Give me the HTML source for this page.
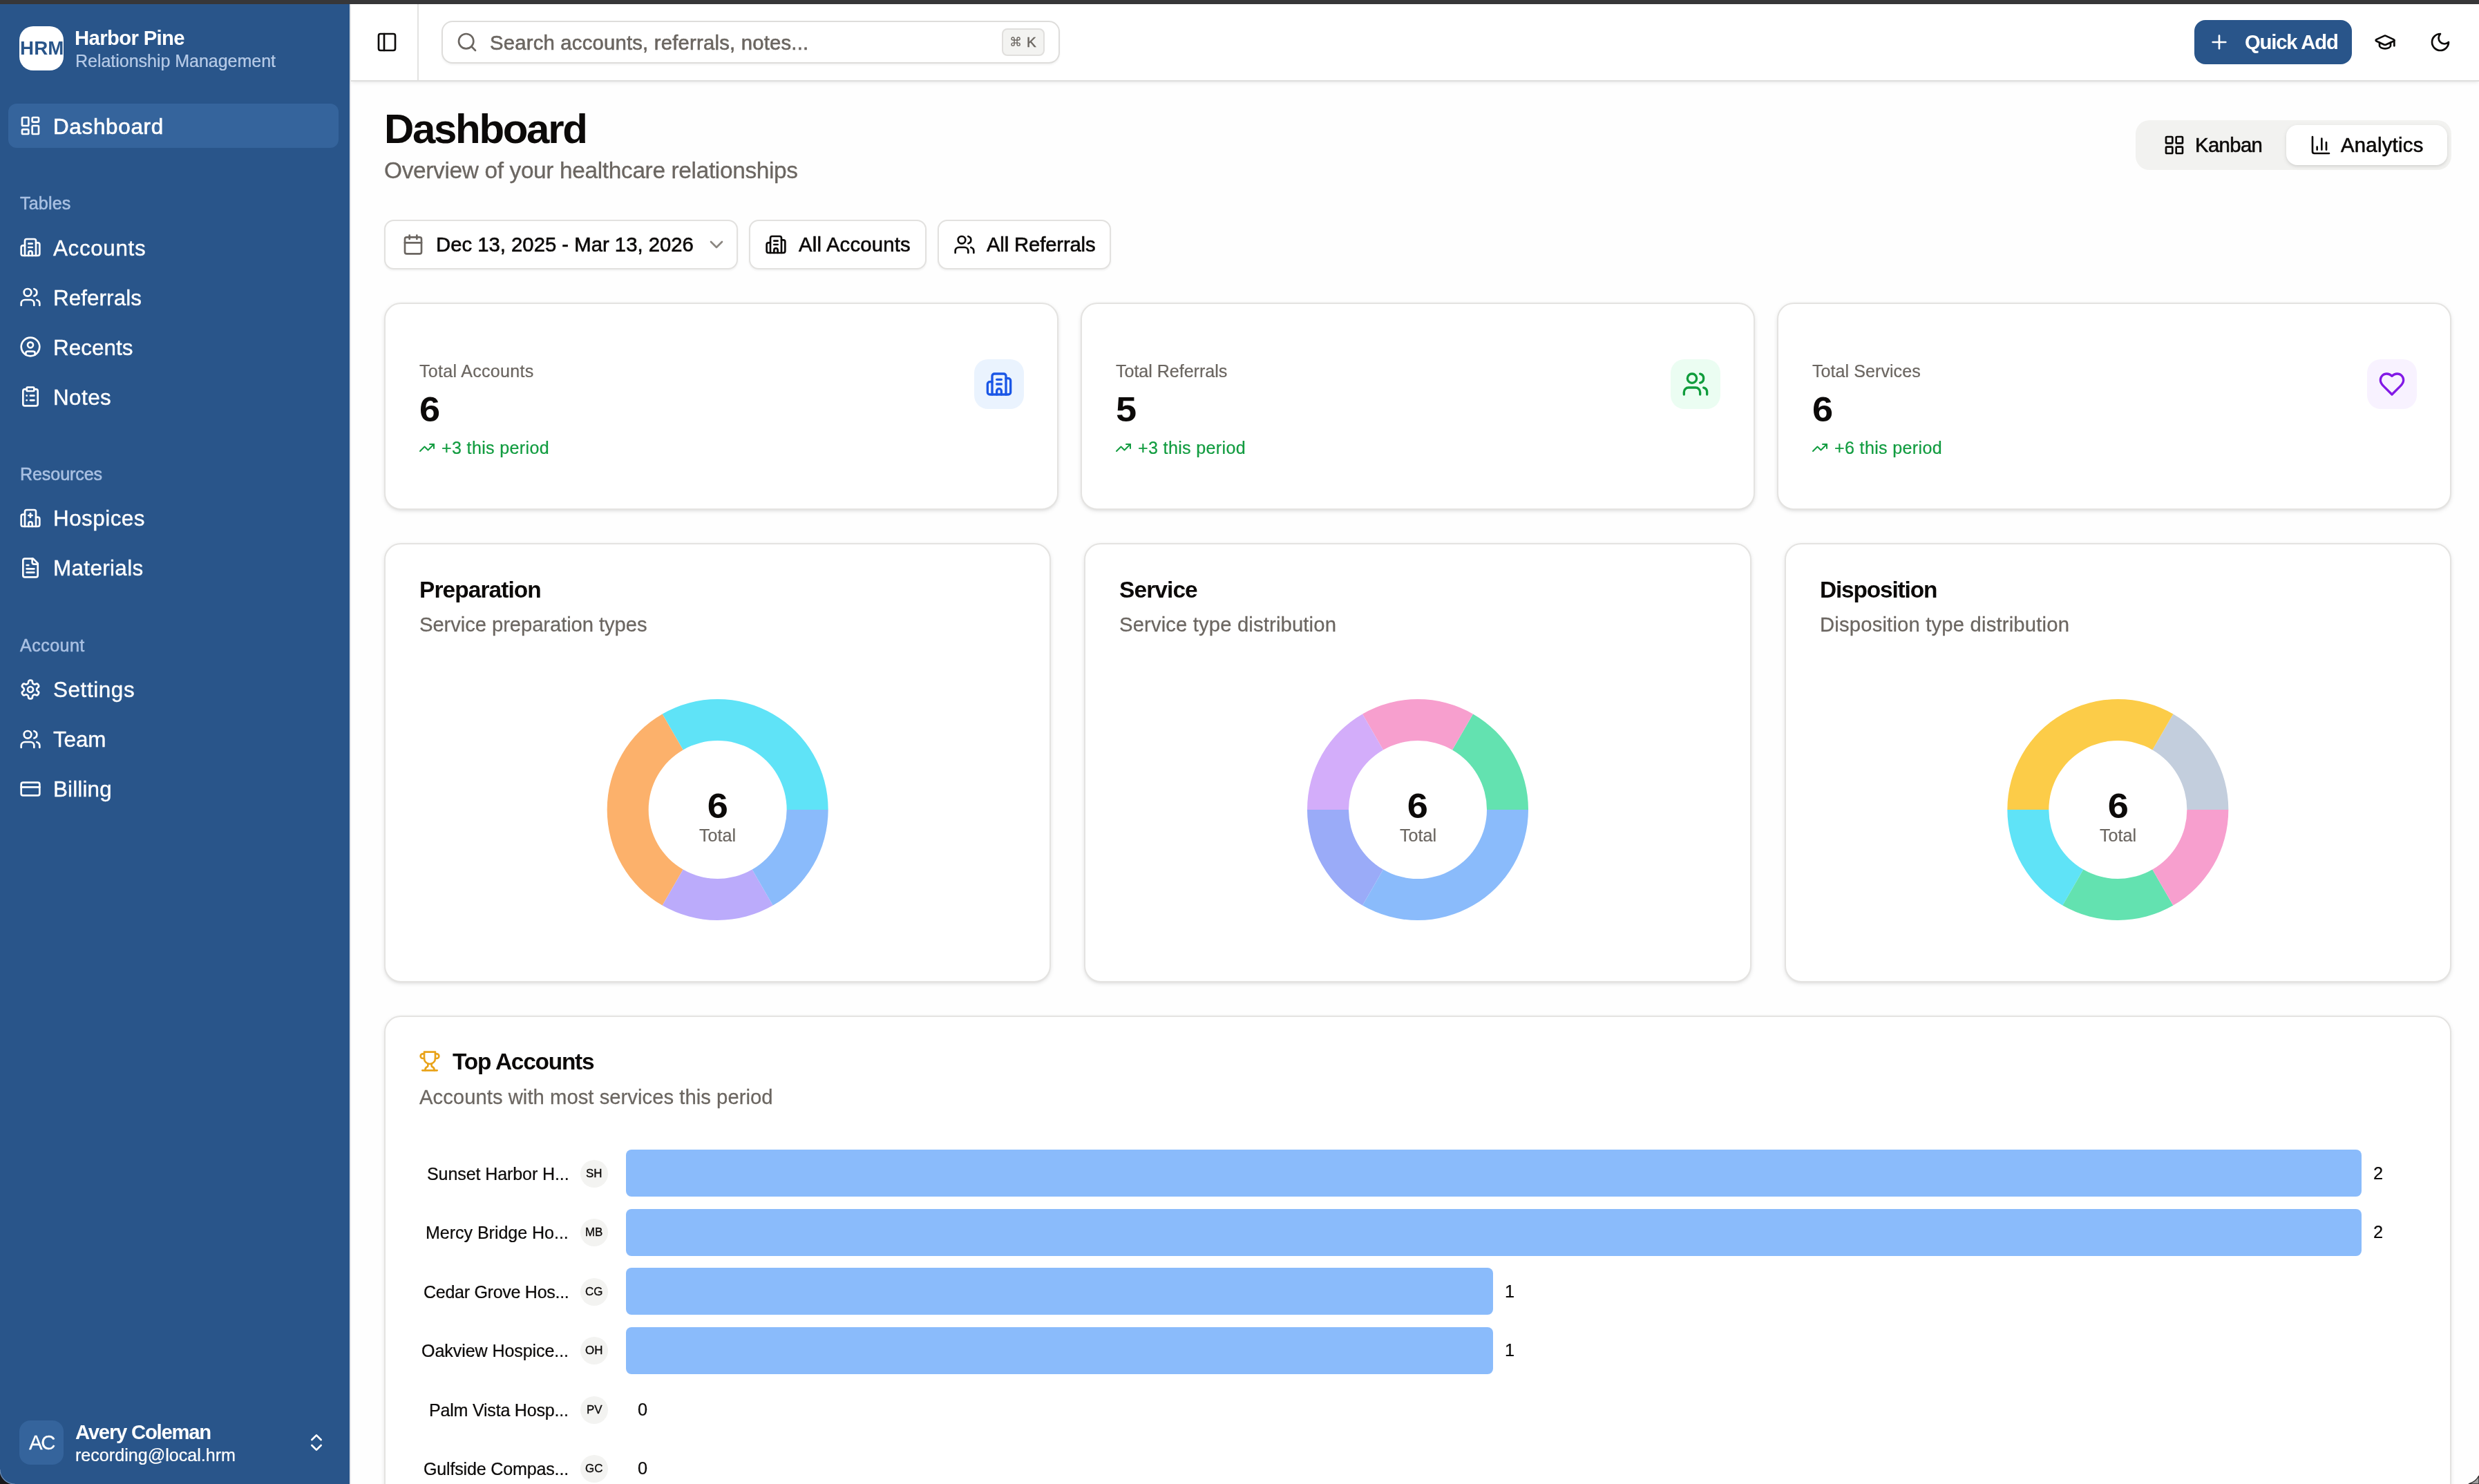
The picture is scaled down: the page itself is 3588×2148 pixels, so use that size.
<!DOCTYPE html>
<html><head><meta charset="utf-8"><title>Dashboard</title>
<style>
html,body{margin:0;padding:0}
body{width:3588px;height:2148px;overflow:hidden;background:#fefefe;font-family:"Liberation Sans",sans-serif;position:relative;-webkit-font-smoothing:antialiased}
body>div,body>svg{position:absolute}
.t{margin:0;padding:0;will-change:transform}
.i{display:block;overflow:visible}
</style></head><body>
<div style="left:0px;top:0px;width:3588px;height:6px;background:#373739;"></div>
<div style="left:0px;top:6px;width:506px;height:2142px;background:#29558a;"></div>
<div style="left:506px;top:6px;width:2px;height:2142px;background:#e6e8ec;"></div>
<div style="left:28px;top:38px;width:64px;height:64px;background:#fff;border-radius:20px;"></div>
<div class="t" style="left:28.75px;top:52.00px;font-size:27.69px;line-height:36px;color:#29558a;white-space:pre;font-weight:700;letter-spacing:0.143px;">HRM</div>
<div class="t" style="left:108.00px;top:35.86px;font-size:29.26px;line-height:38px;color:#fff;white-space:pre;font-weight:700;letter-spacing:-0.622px;">Harbor Pine</div>
<div class="t" style="left:109.00px;top:71.81px;font-size:25.08px;line-height:33px;color:#b7cbe7;white-space:pre;-webkit-text-stroke:0.23px #b7cbe7;letter-spacing:-0.061px;">Relationship Management</div>
<div style="left:12px;top:150px;width:478px;height:64px;background:#35649c;border-radius:12px;"></div>
<svg class="i" style="left:28px;top:166px;" width="32" height="32" viewBox="0 0 24 24" fill="none" stroke="#fff" stroke-width="2" stroke-linecap="round" stroke-linejoin="round"><rect width="7" height="9" x="3" y="3" rx="1"/><rect width="7" height="5" x="14" y="3" rx="1"/><rect width="7" height="9" x="14" y="12" rx="1"/><rect width="7" height="5" x="3" y="16" rx="1"/></svg>
<div class="t" style="left:77.00px;top:162.64px;font-size:31.35px;line-height:41px;color:#fff;white-space:pre;-webkit-text-stroke:0.66px #fff;letter-spacing:0.736px;">Dashboard</div>
<div class="t" style="left:29.00px;top:278.11px;font-size:25.08px;line-height:33px;color:#a9c0e2;white-space:pre;-webkit-text-stroke:0.53px #a9c0e2;letter-spacing:0.167px;">Tables</div>
<div class="t" style="left:29.00px;top:670.11px;font-size:25.08px;line-height:33px;color:#a9c0e2;white-space:pre;-webkit-text-stroke:0.53px #a9c0e2;letter-spacing:-0.098px;">Resources</div>
<div class="t" style="left:29.00px;top:918.11px;font-size:25.08px;line-height:33px;color:#a9c0e2;white-space:pre;-webkit-text-stroke:0.53px #a9c0e2;letter-spacing:0.440px;">Account</div>
<svg class="i" style="left:28px;top:342px;" width="32" height="32" viewBox="0 0 24 24" fill="none" stroke="#fff" stroke-width="2" stroke-linecap="round" stroke-linejoin="round"><path d="M10 12h4"/><path d="M10 8h4"/><path d="M14 21v-3a2 2 0 0 0-4 0v3"/><path d="M6 10H4a2 2 0 0 0-2 2v7a2 2 0 0 0 2 2h16a2 2 0 0 0 2-2V9a2 2 0 0 0-2-2h-2"/><path d="M6 21V5a2 2 0 0 1 2-2h8a2 2 0 0 1 2 2v16"/></svg>
<div class="t" style="left:77.00px;top:338.64px;font-size:31.35px;line-height:41px;color:#fff;white-space:pre;-webkit-text-stroke:0.38px #fff;letter-spacing:0.662px;">Accounts</div>
<svg class="i" style="left:28px;top:414px;" width="32" height="32" viewBox="0 0 24 24" fill="none" stroke="#fff" stroke-width="2" stroke-linecap="round" stroke-linejoin="round"><path d="M16 21v-2a4 4 0 0 0-4-4H6a4 4 0 0 0-4 4v2"/><circle cx="9" cy="7" r="4"/><path d="M22 21v-2a4 4 0 0 0-3-3.87"/><path d="M16 3.13a4 4 0 0 1 0 7.75"/></svg>
<div class="t" style="left:77.00px;top:410.64px;font-size:31.35px;line-height:41px;color:#fff;white-space:pre;-webkit-text-stroke:0.38px #fff;letter-spacing:0.091px;">Referrals</div>
<svg class="i" style="left:28px;top:486px;" width="32" height="32" viewBox="0 0 24 24" fill="none" stroke="#fff" stroke-width="2" stroke-linecap="round" stroke-linejoin="round"><circle cx="12" cy="12" r="10"/><circle cx="12" cy="10" r="3"/><path d="M7 20.662V19a2 2 0 0 1 2-2h6a2 2 0 0 1 2 2v1.662"/></svg>
<div class="t" style="left:77.00px;top:482.64px;font-size:31.35px;line-height:41px;color:#fff;white-space:pre;-webkit-text-stroke:0.38px #fff;letter-spacing:0.070px;">Recents</div>
<svg class="i" style="left:28px;top:558px;" width="32" height="32" viewBox="0 0 24 24" fill="none" stroke="#fff" stroke-width="2" stroke-linecap="round" stroke-linejoin="round"><rect width="8" height="4" x="8" y="2" rx="1" ry="1"/><path d="M16 4h2a2 2 0 0 1 2 2v14a2 2 0 0 1-2 2H6a2 2 0 0 1-2-2V6a2 2 0 0 1 2-2h2"/><path d="M12 11h4"/><path d="M12 16h4"/><path d="M8 11h.01"/><path d="M8 16h.01"/></svg>
<div class="t" style="left:77.00px;top:554.64px;font-size:31.35px;line-height:41px;color:#fff;white-space:pre;-webkit-text-stroke:0.38px #fff;letter-spacing:0.471px;">Notes</div>
<svg class="i" style="left:28px;top:733.8px;" width="32" height="32" viewBox="0 0 24 24" fill="none" stroke="#fff" stroke-width="2" stroke-linecap="round" stroke-linejoin="round"><path d="M12 7v4"/><path d="M14 21v-3a2 2 0 0 0-4 0v3"/><path d="M14 9h-4"/><path d="M18 11h2a2 2 0 0 1 2 2v6a2 2 0 0 1-2 2H4a2 2 0 0 1-2-2v-9a2 2 0 0 1 2-2h2"/><path d="M18 21V5a2 2 0 0 0-2-2H8a2 2 0 0 0-2 2v16"/></svg>
<div class="t" style="left:77.00px;top:730.44px;font-size:31.35px;line-height:41px;color:#fff;white-space:pre;-webkit-text-stroke:0.38px #fff;letter-spacing:0.508px;">Hospices</div>
<svg class="i" style="left:28px;top:805.8px;" width="32" height="32" viewBox="0 0 24 24" fill="none" stroke="#fff" stroke-width="2" stroke-linecap="round" stroke-linejoin="round"><path d="M15 2H6a2 2 0 0 0-2 2v16a2 2 0 0 0 2 2h12a2 2 0 0 0 2-2V7Z"/><path d="M14 2v4a2 2 0 0 0 2 2h4"/><path d="M10 9H8"/><path d="M16 13H8"/><path d="M16 17H8"/></svg>
<div class="t" style="left:77.00px;top:802.44px;font-size:31.35px;line-height:41px;color:#fff;white-space:pre;-webkit-text-stroke:0.38px #fff;letter-spacing:0.380px;">Materials</div>
<svg class="i" style="left:28px;top:981.7px;" width="32" height="32" viewBox="0 0 24 24" fill="none" stroke="#fff" stroke-width="2" stroke-linecap="round" stroke-linejoin="round"><path d="M12.22 2h-.44a2 2 0 0 0-2 2v.18a2 2 0 0 1-1 1.73l-.43.25a2 2 0 0 1-2 0l-.15-.08a2 2 0 0 0-2.73.73l-.22.38a2 2 0 0 0 .73 2.73l.15.1a2 2 0 0 1 1 1.72v.51a2 2 0 0 1-1 1.74l-.15.09a2 2 0 0 0-.73 2.73l.22.38a2 2 0 0 0 2.73.73l.15-.08a2 2 0 0 1 2 0l.43.25a2 2 0 0 1 1 1.73V20a2 2 0 0 0 2 2h.44a2 2 0 0 0 2-2v-.18a2 2 0 0 1 1-1.73l.43-.25a2 2 0 0 1 2 0l.15.08a2 2 0 0 0 2.73-.73l.22-.39a2 2 0 0 0-.73-2.73l-.15-.08a2 2 0 0 1-1-1.74v-.5a2 2 0 0 1 1-1.74l.15-.09a2 2 0 0 0 .73-2.73l-.22-.38a2 2 0 0 0-2.73-.73l-.15.08a2 2 0 0 1-2 0l-.43-.25a2 2 0 0 1-1-1.73V4a2 2 0 0 0-2-2z"/><circle cx="12" cy="12" r="3"/></svg>
<div class="t" style="left:77.00px;top:978.34px;font-size:31.35px;line-height:41px;color:#fff;white-space:pre;-webkit-text-stroke:0.38px #fff;letter-spacing:0.615px;">Settings</div>
<svg class="i" style="left:28px;top:1053.7px;" width="32" height="32" viewBox="0 0 24 24" fill="none" stroke="#fff" stroke-width="2" stroke-linecap="round" stroke-linejoin="round"><path d="M16 21v-2a4 4 0 0 0-4-4H6a4 4 0 0 0-4 4v2"/><circle cx="9" cy="7" r="4"/><path d="M22 21v-2a4 4 0 0 0-3-3.87"/><path d="M16 3.13a4 4 0 0 1 0 7.75"/></svg>
<div class="t" style="left:77.00px;top:1050.34px;font-size:31.35px;line-height:41px;color:#fff;white-space:pre;-webkit-text-stroke:0.38px #fff;letter-spacing:-0.091px;">Team</div>
<svg class="i" style="left:28px;top:1125.7px;" width="32" height="32" viewBox="0 0 24 24" fill="none" stroke="#fff" stroke-width="2" stroke-linecap="round" stroke-linejoin="round"><rect width="20" height="14" x="2" y="5" rx="2"/><line x1="2" x2="22" y1="10" y2="10"/></svg>
<div class="t" style="left:77.00px;top:1122.34px;font-size:31.35px;line-height:41px;color:#fff;white-space:pre;-webkit-text-stroke:0.38px #fff;letter-spacing:0.165px;">Billing</div>
<div style="left:28px;top:2056px;width:64px;height:64px;background:#35649c;border-radius:16px;"></div>
<div class="t" style="left:42.00px;top:2068.86px;font-size:29.26px;line-height:38px;color:#fff;white-space:pre;-webkit-text-stroke:0.26px #fff;letter-spacing:-2.324px;">AC</div>
<div class="t" style="left:109.00px;top:2054.16px;font-size:29.26px;line-height:38px;color:#fff;white-space:pre;font-weight:700;letter-spacing:-1.227px;">Avery Coleman</div>
<div class="t" style="left:109.00px;top:2089.81px;font-size:25.08px;line-height:33px;color:#fff;white-space:pre;-webkit-text-stroke:0.23px #fff;letter-spacing:0.012px;">recording@local.hrm</div>
<svg class="i" style="left:442px;top:2072px;" width="32" height="32" viewBox="0 0 24 24" fill="none" stroke="#fff" stroke-width="2" stroke-linecap="round" stroke-linejoin="round"><path d="m7 15 5 5 5-5"/><path d="m7 9 5-5 5 5"/></svg>
<div style="left:508px;top:6px;width:3080px;height:112px;background:#fff;border-bottom:2px solid #dfdfde;box-shadow:0 2px 6px rgba(0,0,0,.06),0 2px 4px -2px rgba(0,0,0,.06);box-sizing:border-box;"></div>
<div style="left:604px;top:6px;width:2px;height:110px;background:#e2e2e1;"></div>
<svg class="i" style="left:544px;top:45px;" width="32" height="32" viewBox="0 0 24 24" fill="none" stroke="#0c0a09" stroke-width="2" stroke-linecap="round" stroke-linejoin="round"><rect width="18" height="18" x="3" y="3" rx="2"/><path d="M9 3v18"/></svg>
<div style="left:639px;top:29.5px;width:895px;height:62.5px;background:#fff;border:2px solid #dedddb;border-radius:16px;box-sizing:border-box;box-shadow:0 2px 3px rgba(0,0,0,.05);"></div>
<svg class="i" style="left:660px;top:45px;" width="32" height="32" viewBox="0 0 24 24" fill="none" stroke="#6b6661" stroke-width="2" stroke-linecap="round" stroke-linejoin="round"><circle cx="11" cy="11" r="8"/><path d="m21 21-4.3-4.3"/></svg>
<div class="t" style="left:709.00px;top:42.86px;font-size:29.26px;line-height:38px;color:#6b6661;white-space:pre;-webkit-text-stroke:0.61px #6b6661;letter-spacing:0.215px;">Search accounts, referrals, notes...</div>
<div style="left:1450px;top:41px;width:62px;height:40px;background:#f3f3f1;border:2px solid #e0dfdd;border-radius:8px;box-sizing:border-box;"></div>
<svg class="i" style="left:1462.4px;top:51.6px;" width="16.2" height="16.2" viewBox="0 0 24 24" fill="none" stroke="#6b6661" stroke-width="2.1" stroke-linecap="round" stroke-linejoin="round"><path d="M15 6v12a3 3 0 1 0 3-3H6a3 3 0 1 0 3 3V6a3 3 0 1 0-3 3h12a3 3 0 1 0-3-3"/></svg>
<div class="t" style="left:1485.60px;top:47.26px;font-size:20.60px;line-height:27px;color:#6b6661;white-space:pre;-webkit-text-stroke:0.43px #6b6661;">K</div>
<div style="left:3176px;top:29px;width:228px;height:64px;background:#29558a;border-radius:16px;"></div>
<svg class="i" style="left:3196px;top:45px;" width="32" height="32" viewBox="0 0 24 24" fill="none" stroke="#fff" stroke-width="2" stroke-linecap="round" stroke-linejoin="round"><path d="M5 12h14"/><path d="M12 5v14"/></svg>
<div class="t" style="left:3248.70px;top:42.06px;font-size:29.26px;line-height:38px;color:#fff;white-space:pre;font-weight:700;letter-spacing:-1.170px;">Quick Add</div>
<svg class="i" style="left:3436px;top:45px;" width="32" height="32" viewBox="0 0 24 24" fill="none" stroke="#0c0a09" stroke-width="2" stroke-linecap="round" stroke-linejoin="round"><path d="M21.42 10.922a1 1 0 0 0-.019-1.838L12.83 5.18a2 2 0 0 0-1.66 0L2.6 9.08a1 1 0 0 0 0 1.832l8.57 3.908a2 2 0 0 0 1.66 0z"/><path d="M22 10v6"/><path d="M6 12.5V16a6 3 0 0 0 12 0v-3.5"/></svg>
<svg class="i" style="left:3516px;top:45px;" width="32" height="32" viewBox="0 0 24 24" fill="none" stroke="#0c0a09" stroke-width="2" stroke-linecap="round" stroke-linejoin="round"><path d="M12 3a6 6 0 0 0 9 9 9 9 0 1 1-9-9Z"/></svg>
<div class="t" style="left:555.50px;top:147.71px;font-size:60.00px;line-height:78px;color:#0c0a09;white-space:pre;font-weight:700;letter-spacing:-2.322px;">Dashboard</div>
<div class="t" style="left:556.00px;top:225.11px;font-size:33.44px;line-height:43px;color:#6b6661;white-space:pre;-webkit-text-stroke:0.30px #6b6661;letter-spacing:-0.351px;">Overview of your healthcare relationships</div>
<div style="left:3091px;top:174px;width:457px;height:72px;background:#f2f2f0;border-radius:20px;"></div>
<div style="left:3309px;top:181px;width:233px;height:58px;background:#fff;border-radius:16px;box-shadow:0 2px 6px rgba(0,0,0,.10),0 2px 4px -2px rgba(0,0,0,.10);"></div>
<svg class="i" style="left:3131px;top:194px;" width="32" height="32" viewBox="0 0 24 24" fill="none" stroke="#0c0a09" stroke-width="2" stroke-linecap="round" stroke-linejoin="round"><rect width="7" height="7" x="3" y="3" rx="1"/><rect width="7" height="7" x="14" y="3" rx="1"/><rect width="7" height="7" x="14" y="14" rx="1"/><rect width="7" height="7" x="3" y="14" rx="1"/></svg>
<div class="t" style="left:3177.00px;top:191.06px;font-size:29.26px;line-height:38px;color:#0c0a09;white-space:pre;-webkit-text-stroke:0.61px #0c0a09;letter-spacing:-0.598px;">Kanban</div>
<svg class="i" style="left:3343px;top:194px;" width="32" height="32" viewBox="0 0 24 24" fill="none" stroke="#0c0a09" stroke-width="2" stroke-linecap="round" stroke-linejoin="round"><path d="M3 3v16a2 2 0 0 0 2 2h16"/><path d="M18 17V9"/><path d="M13 17V5"/><path d="M8 17v-3"/></svg>
<div class="t" style="left:3388.00px;top:191.06px;font-size:29.26px;line-height:38px;color:#0c0a09;white-space:pre;-webkit-text-stroke:0.61px #0c0a09;letter-spacing:0.290px;">Analytics</div>
<div style="left:556px;top:318px;width:512px;height:72px;background:#fff;border:2px solid #e2e1df;border-radius:14px;box-sizing:border-box;box-shadow:0 2px 3px rgba(0,0,0,.05);"></div>
<svg class="i" style="left:582px;top:338px;" width="32" height="32" viewBox="0 0 24 24" fill="none" stroke="#6b6661" stroke-width="2" stroke-linecap="round" stroke-linejoin="round"><path d="M8 2v4"/><path d="M16 2v4"/><rect width="18" height="18" x="3" y="4" rx="2"/><path d="M3 10h18"/></svg>
<div class="t" style="left:631.00px;top:335.06px;font-size:29.26px;line-height:38px;color:#0c0a09;white-space:pre;-webkit-text-stroke:0.61px #0c0a09;letter-spacing:0.019px;">Dec 13, 2025 - Mar 13, 2026</div>
<svg class="i" style="left:1021px;top:338px;" width="32" height="32" viewBox="0 0 24 24" fill="none" stroke="#8b8681" stroke-width="2" stroke-linecap="round" stroke-linejoin="round"><path d="m6 9 6 6 6-6"/></svg>
<div style="left:1084px;top:318px;width:257px;height:72px;background:#fff;border:2px solid #e2e1df;border-radius:14px;box-sizing:border-box;box-shadow:0 2px 3px rgba(0,0,0,.05);"></div>
<svg class="i" style="left:1106.7px;top:338px;" width="32" height="32" viewBox="0 0 24 24" fill="none" stroke="#0c0a09" stroke-width="2" stroke-linecap="round" stroke-linejoin="round"><path d="M10 12h4"/><path d="M10 8h4"/><path d="M14 21v-3a2 2 0 0 0-4 0v3"/><path d="M6 10H4a2 2 0 0 0-2 2v7a2 2 0 0 0 2 2h16a2 2 0 0 0 2-2V9a2 2 0 0 0-2-2h-2"/><path d="M6 21V5a2 2 0 0 1 2-2h8a2 2 0 0 1 2 2v16"/></svg>
<div class="t" style="left:1155.80px;top:335.06px;font-size:29.26px;line-height:38px;color:#0c0a09;white-space:pre;-webkit-text-stroke:0.61px #0c0a09;letter-spacing:0.217px;">All Accounts</div>
<div style="left:1357px;top:318px;width:251px;height:72px;background:#fff;border:2px solid #e2e1df;border-radius:14px;box-sizing:border-box;box-shadow:0 2px 3px rgba(0,0,0,.05);"></div>
<svg class="i" style="left:1379.5px;top:338px;" width="32" height="32" viewBox="0 0 24 24" fill="none" stroke="#0c0a09" stroke-width="2" stroke-linecap="round" stroke-linejoin="round"><path d="M16 21v-2a4 4 0 0 0-4-4H6a4 4 0 0 0-4 4v2"/><circle cx="9" cy="7" r="4"/><path d="M22 21v-2a4 4 0 0 0-3-3.87"/><path d="M16 3.13a4 4 0 0 1 0 7.75"/></svg>
<div class="t" style="left:1428.30px;top:335.06px;font-size:29.26px;line-height:38px;color:#0c0a09;white-space:pre;-webkit-text-stroke:0.61px #0c0a09;letter-spacing:-0.142px;">All Referrals</div>
<div style="left:556px;top:438px;width:976px;height:300px;background:#fff;border:2px solid #e4e3e1;border-radius:24px;box-sizing:border-box;box-shadow:0 2px 6px rgba(0,0,0,.09),0 2px 4px -2px rgba(0,0,0,.09);"></div>
<div class="t" style="left:607.00px;top:520.81px;font-size:25.08px;line-height:33px;color:#6b6661;white-space:pre;-webkit-text-stroke:0.23px #6b6661;letter-spacing:0.270px;">Total Accounts</div>
<div class="t" style="left:606.50px;top:561.29px;font-size:49.68px;line-height:65px;color:#0c0a09;white-space:pre;font-weight:700;transform:scaleX(1.09);transform-origin:left center;">6</div>
<svg class="i" style="left:606px;top:635.7px;" width="24" height="24" viewBox="0 0 24 24" fill="none" stroke="#129c40" stroke-width="2" stroke-linecap="round" stroke-linejoin="round"><polyline points="22 7 13.5 15.5 8.5 10.5 2 17"/><polyline points="16 7 22 7 22 13"/></svg>
<div class="t" style="left:638.75px;top:632.31px;font-size:25.08px;line-height:33px;color:#129c40;white-space:pre;-webkit-text-stroke:0.23px #129c40;letter-spacing:0.337px;">+3 this period</div>
<div style="left:1410px;top:520px;width:72px;height:72px;background:#eaf3fe;border-radius:20px;"></div>
<svg class="i" style="left:1426px;top:536px;" width="40" height="40" viewBox="0 0 24 24" fill="none" stroke="#1b57e6" stroke-width="2" stroke-linecap="round" stroke-linejoin="round"><path d="M10 12h4"/><path d="M10 8h4"/><path d="M14 21v-3a2 2 0 0 0-4 0v3"/><path d="M6 10H4a2 2 0 0 0-2 2v7a2 2 0 0 0 2 2h16a2 2 0 0 0 2-2V9a2 2 0 0 0-2-2h-2"/><path d="M6 21V5a2 2 0 0 1 2-2h8a2 2 0 0 1 2 2v16"/></svg>
<div style="left:1564px;top:438px;width:976px;height:300px;background:#fff;border:2px solid #e4e3e1;border-radius:24px;box-sizing:border-box;box-shadow:0 2px 6px rgba(0,0,0,.09),0 2px 4px -2px rgba(0,0,0,.09);"></div>
<div class="t" style="left:1615.00px;top:520.81px;font-size:25.08px;line-height:33px;color:#6b6661;white-space:pre;-webkit-text-stroke:0.23px #6b6661;letter-spacing:-0.029px;">Total Referrals</div>
<div class="t" style="left:1614.50px;top:561.29px;font-size:49.68px;line-height:65px;color:#0c0a09;white-space:pre;font-weight:700;transform:scaleX(1.09);transform-origin:left center;">5</div>
<svg class="i" style="left:1614px;top:635.7px;" width="24" height="24" viewBox="0 0 24 24" fill="none" stroke="#129c40" stroke-width="2" stroke-linecap="round" stroke-linejoin="round"><polyline points="22 7 13.5 15.5 8.5 10.5 2 17"/><polyline points="16 7 22 7 22 13"/></svg>
<div class="t" style="left:1646.75px;top:632.31px;font-size:25.08px;line-height:33px;color:#129c40;white-space:pre;-webkit-text-stroke:0.23px #129c40;letter-spacing:0.337px;">+3 this period</div>
<div style="left:2418px;top:520px;width:72px;height:72px;background:#ebfdf2;border-radius:20px;"></div>
<svg class="i" style="left:2434px;top:536px;" width="40" height="40" viewBox="0 0 24 24" fill="none" stroke="#109c3c" stroke-width="2" stroke-linecap="round" stroke-linejoin="round"><path d="M16 21v-2a4 4 0 0 0-4-4H6a4 4 0 0 0-4 4v2"/><circle cx="9" cy="7" r="4"/><path d="M22 21v-2a4 4 0 0 0-3-3.87"/><path d="M16 3.13a4 4 0 0 1 0 7.75"/></svg>
<div style="left:2572px;top:438px;width:976px;height:300px;background:#fff;border:2px solid #e4e3e1;border-radius:24px;box-sizing:border-box;box-shadow:0 2px 6px rgba(0,0,0,.09),0 2px 4px -2px rgba(0,0,0,.09);"></div>
<div class="t" style="left:2623.00px;top:520.81px;font-size:25.08px;line-height:33px;color:#6b6661;white-space:pre;-webkit-text-stroke:0.23px #6b6661;letter-spacing:0.049px;">Total Services</div>
<div class="t" style="left:2622.50px;top:561.29px;font-size:49.68px;line-height:65px;color:#0c0a09;white-space:pre;font-weight:700;transform:scaleX(1.09);transform-origin:left center;">6</div>
<svg class="i" style="left:2622px;top:635.7px;" width="24" height="24" viewBox="0 0 24 24" fill="none" stroke="#129c40" stroke-width="2" stroke-linecap="round" stroke-linejoin="round"><polyline points="22 7 13.5 15.5 8.5 10.5 2 17"/><polyline points="16 7 22 7 22 13"/></svg>
<div class="t" style="left:2654.75px;top:632.31px;font-size:25.08px;line-height:33px;color:#129c40;white-space:pre;-webkit-text-stroke:0.23px #129c40;letter-spacing:0.337px;">+6 this period</div>
<div style="left:3426px;top:520px;width:72px;height:72px;background:#f8f2ff;border-radius:20px;"></div>
<svg class="i" style="left:3442px;top:536px;" width="40" height="40" viewBox="0 0 24 24" fill="none" stroke="#8219e6" stroke-width="2" stroke-linecap="round" stroke-linejoin="round"><path d="M19 14c1.49-1.46 3-3.21 3-5.5A5.5 5.5 0 0 0 16.5 3c-1.76 0-3 .5-4.5 2-1.5-1.5-2.74-2-4.5-2A5.5 5.5 0 0 0 2 8.5c0 2.3 1.5 4.05 3 5.5l7 7Z"/></svg>
<div style="left:556px;top:786px;width:965.33px;height:636px;background:#fff;border:2px solid #e4e3e1;border-radius:24px;box-sizing:border-box;box-shadow:0 2px 6px rgba(0,0,0,.09),0 2px 4px -2px rgba(0,0,0,.09);"></div>
<div class="t" style="left:607.00px;top:831.71px;font-size:33.44px;line-height:43px;color:#0c0a09;white-space:pre;font-weight:700;letter-spacing:-0.894px;">Preparation</div>
<div class="t" style="left:607.00px;top:885.36px;font-size:29.26px;line-height:38px;color:#6b6661;white-space:pre;-webkit-text-stroke:0.26px #6b6661;letter-spacing:-0.088px;">Service preparation types</div>
<div class="t" style="left:1024.85px;top:1134.99px;font-size:49.68px;line-height:65px;color:#0c0a09;white-space:pre;font-weight:700;transform:scaleX(1.09);transform-origin:center center;">6</div>
<div class="t" style="left:1012.17px;top:1193.11px;font-size:25.08px;line-height:33px;color:#6b6661;white-space:pre;-webkit-text-stroke:0.23px #6b6661;letter-spacing:0.004px;">Total</div>
<div style="left:1569.33px;top:786px;width:965.33px;height:636px;background:#fff;border:2px solid #e4e3e1;border-radius:24px;box-sizing:border-box;box-shadow:0 2px 6px rgba(0,0,0,.09),0 2px 4px -2px rgba(0,0,0,.09);"></div>
<div class="t" style="left:1620.33px;top:831.71px;font-size:33.44px;line-height:43px;color:#0c0a09;white-space:pre;font-weight:700;letter-spacing:-0.872px;">Service</div>
<div class="t" style="left:1620.33px;top:885.36px;font-size:29.26px;line-height:38px;color:#6b6661;white-space:pre;-webkit-text-stroke:0.26px #6b6661;letter-spacing:0.142px;">Service type distribution</div>
<div class="t" style="left:2038.18px;top:1134.99px;font-size:49.68px;line-height:65px;color:#0c0a09;white-space:pre;font-weight:700;transform:scaleX(1.09);transform-origin:center center;">6</div>
<div class="t" style="left:2025.50px;top:1193.11px;font-size:25.08px;line-height:33px;color:#6b6661;white-space:pre;-webkit-text-stroke:0.23px #6b6661;letter-spacing:0.004px;">Total</div>
<div style="left:2582.67px;top:786px;width:965.33px;height:636px;background:#fff;border:2px solid #e4e3e1;border-radius:24px;box-sizing:border-box;box-shadow:0 2px 6px rgba(0,0,0,.09),0 2px 4px -2px rgba(0,0,0,.09);"></div>
<div class="t" style="left:2633.67px;top:831.71px;font-size:33.44px;line-height:43px;color:#0c0a09;white-space:pre;font-weight:700;letter-spacing:-1.160px;">Disposition</div>
<div class="t" style="left:2633.67px;top:885.36px;font-size:29.26px;line-height:38px;color:#6b6661;white-space:pre;-webkit-text-stroke:0.26px #6b6661;letter-spacing:0.173px;">Disposition type distribution</div>
<div class="t" style="left:3051.52px;top:1134.99px;font-size:49.68px;line-height:65px;color:#0c0a09;white-space:pre;font-weight:700;transform:scaleX(1.09);transform-origin:center center;">6</div>
<div class="t" style="left:3038.84px;top:1193.11px;font-size:25.08px;line-height:33px;color:#6b6661;white-space:pre;-webkit-text-stroke:0.23px #6b6661;letter-spacing:0.004px;">Total</div>
<svg class="i" style="left:0;top:0" width="3588" height="2148" viewBox="0 0 3588 2148" shape-rendering="geometricPrecision"><path d="M1198.67 1172.00A160 160 0 0 0 958.67 1033.44L988.67 1085.40A100 100 0 0 1 1138.67 1172.00Z" fill="#5fe3f7"/><path d="M958.67 1033.44A160 160 0 0 0 958.67 1310.56L988.67 1258.60A100 100 0 0 1 988.67 1085.40Z" fill="#fcb16b"/><path d="M958.67 1310.56A160 160 0 0 0 1118.67 1310.56L1088.67 1258.60A100 100 0 0 1 988.67 1258.60Z" fill="#bbabfb"/><path d="M1118.67 1310.56A160 160 0 0 0 1198.67 1172.00L1138.67 1172.00A100 100 0 0 1 1088.67 1258.60Z" fill="#8abbfb"/><path d="M2212.00 1172.00A160 160 0 0 0 2132.00 1033.44L2102.00 1085.40A100 100 0 0 1 2152.00 1172.00Z" fill="#63e2b0"/><path d="M2132.00 1033.44A160 160 0 0 0 1972.00 1033.44L2002.00 1085.40A100 100 0 0 1 2102.00 1085.40Z" fill="#f79fce"/><path d="M1972.00 1033.44A160 160 0 0 0 1892.00 1172.00L1952.00 1172.00A100 100 0 0 1 2002.00 1085.40Z" fill="#d3adfa"/><path d="M1892.00 1172.00A160 160 0 0 0 1972.00 1310.56L2002.00 1258.60A100 100 0 0 1 1952.00 1172.00Z" fill="#9aabf8"/><path d="M1972.00 1310.56A160 160 0 0 0 2212.00 1172.00L2152.00 1172.00A100 100 0 0 1 2002.00 1258.60Z" fill="#8abbfb"/><path d="M3225.34 1172.00A160 160 0 0 0 3145.34 1033.44L3115.34 1085.40A100 100 0 0 1 3165.34 1172.00Z" fill="#c3cedd"/><path d="M3145.34 1033.44A160 160 0 0 0 2905.34 1172.00L2965.34 1172.00A100 100 0 0 1 3115.34 1085.40Z" fill="#fccc48"/><path d="M2905.34 1172.00A160 160 0 0 0 2985.34 1310.56L3015.34 1258.60A100 100 0 0 1 2965.34 1172.00Z" fill="#5fe3f7"/><path d="M2985.34 1310.56A160 160 0 0 0 3145.34 1310.56L3115.34 1258.60A100 100 0 0 1 3015.34 1258.60Z" fill="#63e2b0"/><path d="M3145.34 1310.56A160 160 0 0 0 3225.34 1172.00L3165.34 1172.00A100 100 0 0 1 3115.34 1258.60Z" fill="#f79fce"/></svg>
<div style="left:556px;top:1470px;width:2992px;height:720px;background:#fff;border:2px solid #e4e3e1;border-radius:24px;box-sizing:border-box;box-shadow:0 2px 6px rgba(0,0,0,.09),0 2px 4px -2px rgba(0,0,0,.09);"></div>
<svg class="i" style="left:606px;top:1519.5px;" width="32" height="32" viewBox="0 0 24 24" fill="none" stroke="#e9a319" stroke-width="2" stroke-linecap="round" stroke-linejoin="round"><path d="M6 9H4.5a2.5 2.5 0 0 1 0-5H6"/><path d="M18 9h1.5a2.5 2.5 0 0 0 0-5H18"/><path d="M4 22h16"/><path d="M10 14.66V17c0 .55-.47.98-.97 1.21C7.85 18.75 7 20.24 7 22"/><path d="M14 14.66V17c0 .55.47.98.97 1.21C16.15 18.75 17 20.24 17 22"/><path d="M18 2H6v7a6 6 0 0 0 12 0V2Z"/></svg>
<div class="t" style="left:655.00px;top:1514.91px;font-size:33.44px;line-height:43px;color:#0c0a09;white-space:pre;font-weight:700;letter-spacing:-1.226px;">Top Accounts</div>
<div class="t" style="left:607.00px;top:1568.86px;font-size:29.26px;line-height:38px;color:#6b6661;white-space:pre;-webkit-text-stroke:0.26px #6b6661;letter-spacing:0.029px;">Accounts with most services this period</div>
<div class="t" style="left:617.50px;top:1682.66px;font-size:25.08px;line-height:33px;color:#0c0a09;white-space:pre;-webkit-text-stroke:0.23px #0c0a09;letter-spacing:-0.122px;">Sunset Harbor H...</div>
<div style="left:840px;top:1678.5px;width:40px;height:40px;background:#f3f3f1;border-radius:50%;"></div>
<div class="t" style="left:848.25px;top:1687.69px;font-size:16.91px;line-height:22px;color:#0c0a09;white-space:pre;-webkit-text-stroke:0.36px #0c0a09;">SH</div>
<div style="left:906.25px;top:1664.3px;width:2511.5px;height:67.9px;background:#8abbfb;border-radius:8px;"></div>
<div class="t" style="left:3434.75px;top:1681.76px;font-size:25.37px;line-height:33px;color:#0c0a09;white-space:pre;-webkit-text-stroke:0.23px #0c0a09;">2</div>
<div class="t" style="left:616.25px;top:1768.16px;font-size:25.08px;line-height:33px;color:#0c0a09;white-space:pre;-webkit-text-stroke:0.23px #0c0a09;letter-spacing:-0.051px;">Mercy Bridge Ho...</div>
<div style="left:840px;top:1764px;width:40px;height:40px;background:#f3f3f1;border-radius:50%;"></div>
<div class="t" style="left:847.32px;top:1773.19px;font-size:16.91px;line-height:22px;color:#0c0a09;white-space:pre;-webkit-text-stroke:0.36px #0c0a09;">MB</div>
<div style="left:906.25px;top:1749.8px;width:2511.5px;height:67.9px;background:#8abbfb;border-radius:8px;"></div>
<div class="t" style="left:3434.75px;top:1767.26px;font-size:25.37px;line-height:33px;color:#0c0a09;white-space:pre;-webkit-text-stroke:0.23px #0c0a09;">2</div>
<div class="t" style="left:612.50px;top:1853.66px;font-size:25.08px;line-height:33px;color:#0c0a09;white-space:pre;-webkit-text-stroke:0.23px #0c0a09;letter-spacing:-0.308px;">Cedar Grove Hos...</div>
<div style="left:840px;top:1849.5px;width:40px;height:40px;background:#f3f3f1;border-radius:50%;"></div>
<div class="t" style="left:847.32px;top:1858.69px;font-size:16.91px;line-height:22px;color:#0c0a09;white-space:pre;-webkit-text-stroke:0.36px #0c0a09;">CG</div>
<div style="left:906.25px;top:1835.3px;width:1255.2px;height:67.9px;background:#8abbfb;border-radius:8px;"></div>
<div class="t" style="left:2178.45px;top:1852.76px;font-size:25.37px;line-height:33px;color:#0c0a09;white-space:pre;-webkit-text-stroke:0.23px #0c0a09;">1</div>
<div class="t" style="left:610.00px;top:1939.16px;font-size:25.08px;line-height:33px;color:#0c0a09;white-space:pre;-webkit-text-stroke:0.23px #0c0a09;letter-spacing:-0.092px;">Oakview Hospice...</div>
<div style="left:840px;top:1935px;width:40px;height:40px;background:#f3f3f1;border-radius:50%;"></div>
<div class="t" style="left:847.32px;top:1944.19px;font-size:16.91px;line-height:22px;color:#0c0a09;white-space:pre;-webkit-text-stroke:0.36px #0c0a09;">OH</div>
<div style="left:906.25px;top:1920.8px;width:1255.2px;height:67.9px;background:#8abbfb;border-radius:8px;"></div>
<div class="t" style="left:2178.45px;top:1938.26px;font-size:25.37px;line-height:33px;color:#0c0a09;white-space:pre;-webkit-text-stroke:0.23px #0c0a09;">1</div>
<div class="t" style="left:621.25px;top:2024.66px;font-size:25.08px;line-height:33px;color:#0c0a09;white-space:pre;-webkit-text-stroke:0.23px #0c0a09;letter-spacing:-0.227px;">Palm Vista Hosp...</div>
<div style="left:840px;top:2020.5px;width:40px;height:40px;background:#f3f3f1;border-radius:50%;"></div>
<div class="t" style="left:848.72px;top:2029.69px;font-size:16.91px;line-height:22px;color:#0c0a09;white-space:pre;-webkit-text-stroke:0.36px #0c0a09;">PV</div>
<div class="t" style="left:923.25px;top:2023.76px;font-size:25.37px;line-height:33px;color:#0c0a09;white-space:pre;-webkit-text-stroke:0.23px #0c0a09;">0</div>
<div class="t" style="left:613.00px;top:2110.16px;font-size:25.08px;line-height:33px;color:#0c0a09;white-space:pre;-webkit-text-stroke:0.23px #0c0a09;letter-spacing:-0.182px;">Gulfside Compas...</div>
<div style="left:840px;top:2106px;width:40px;height:40px;background:#f3f3f1;border-radius:50%;"></div>
<div class="t" style="left:847.32px;top:2115.19px;font-size:16.91px;line-height:22px;color:#0c0a09;white-space:pre;-webkit-text-stroke:0.36px #0c0a09;">GC</div>
<div class="t" style="left:923.25px;top:2109.26px;font-size:25.37px;line-height:33px;color:#0c0a09;white-space:pre;-webkit-text-stroke:0.23px #0c0a09;">0</div>
<svg class="i" style="left:0;top:2126px" width="22" height="22" viewBox="0 0 22 22"><path d="M0 0V22H22A21 21 0 0 1 0 1Z" fill="#19191b"/><path d="M0 1A21 21 0 0 0 21.5 22" fill="none" stroke="#6f8fb8" stroke-width="1.2"/></svg>
<svg class="i" style="left:3568px;top:2128px" width="20" height="20" viewBox="0 0 20 20"><path d="M5 20Q15.5 16.5 20 8V20Z" fill="#a0a0a0" stroke="#2a2a2a" stroke-width="1.4"/></svg>
</body></html>
